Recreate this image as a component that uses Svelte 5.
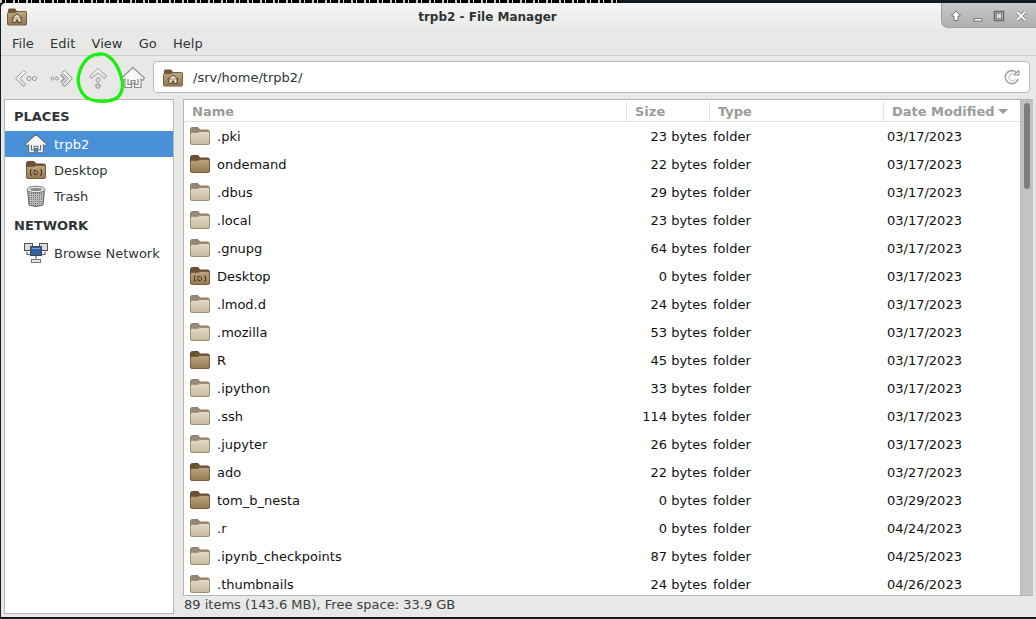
<script>
	const files = [
		{ name: '.pki', size: '23 bytes', date: '03/17/2023', kind: 'hidden' },
		{ name: 'ondemand', size: '22 bytes', date: '03/17/2023', kind: 'plain' },
		{ name: '.dbus', size: '29 bytes', date: '03/17/2023', kind: 'hidden' },
		{ name: '.local', size: '23 bytes', date: '03/17/2023', kind: 'hidden' },
		{ name: '.gnupg', size: '64 bytes', date: '03/17/2023', kind: 'hidden' },
		{ name: 'Desktop', size: '0 bytes', date: '03/17/2023', kind: 'desktop' },
		{ name: '.lmod.d', size: '24 bytes', date: '03/17/2023', kind: 'hidden' },
		{ name: '.mozilla', size: '53 bytes', date: '03/17/2023', kind: 'hidden' },
		{ name: 'R', size: '45 bytes', date: '03/17/2023', kind: 'plain' },
		{ name: '.ipython', size: '33 bytes', date: '03/17/2023', kind: 'hidden' },
		{ name: '.ssh', size: '114 bytes', date: '03/17/2023', kind: 'hidden' },
		{ name: '.jupyter', size: '26 bytes', date: '03/17/2023', kind: 'hidden' },
		{ name: 'ado', size: '22 bytes', date: '03/27/2023', kind: 'plain' },
		{ name: 'tom_b_nesta', size: '0 bytes', date: '03/29/2023', kind: 'plain' },
		{ name: '.r', size: '0 bytes', date: '04/24/2023', kind: 'hidden' },
		{ name: '.ipynb_checkpoints', size: '87 bytes', date: '04/25/2023', kind: 'hidden' },
		{ name: '.thumbnails', size: '24 bytes', date: '04/26/2023', kind: 'hidden' }
	];
	const menus = ['File', 'Edit', 'View', 'Go', 'Help'];
</script>

{#snippet folder(kind, w = 22, h = 20)}
	<svg class="folder" width={w} height={h} viewBox="0 0 22 20">
		<path
			d="M1.5 17V3.500Q1.500 1.500 3.500 1.500H9l2 2.500h7.500Q20.500 4 20.500 6v11z"
			fill={kind === 'hidden' ? '#978974' : '#6b5232'}
			stroke={kind === 'hidden' ? '#8a7b66' : '#5f482b'}
		/>
		<path
			d="M1.500 8Q1.500 6.500 3 6.500H8.500L11 5.500H19Q20.500 5.500 20.500 7V17Q20.500 18.500 19 18.500H3Q1.500 18.500 1.500 17z"
			fill={kind === 'hidden' ? 'url(#tan-light)' : 'url(#tan-dark)'}
			stroke={kind === 'hidden' ? '#a48f70' : '#7c5f38'}
		/>
		{#if kind === 'desktop'}
			<path d="M7 10H5.500v5H7M15 10h1.500v5H15M9 10.500h2.500l1 1v2l-1 1H9z" fill="none" stroke="#4a3b28" />
		{/if}
	</svg>
{/snippet}

{#snippet homeFolder()}
	<svg width="20" height="19" viewBox="0 0 20 19">
		<path d="M1 15V3q0-1.500 1.500-1.500H8L10 4h8q1 0 1 1v10z" fill="#6f5636" />
		<path d="M.5 6.500q0-1 1-1H8l2-1h8.500q1 0 1 1v11.500q0 1-1 1h-17q-1 0-1-1z" fill="url(#tan-dark)" stroke="#7c5f38" />
		<path d="M4.500 11.500L10 7l5.500 4.500M6 10.500v5h3v-2.500h2v2.500h3v-5" fill="#e8e0d0" stroke="#4a3b28" stroke-width="0.9" />
	</svg>
{/snippet}

{#snippet houseIcon(size, edge, inner)}
	<svg width={size} height={size} viewBox="0 0 24 24">
		<path d="M12 1.500L.5 12l1.500 2.500L4 13v8.500h6.500V17h3v4.500H20V13l2 1.500 1.500-2.500z" fill="#f6f6f4" stroke={edge} stroke-width="1.100" />
		<path d="M7 13v5.500h3V14.500h4v4h3V13" fill="none" stroke={inner} stroke-width="1.200" />
	</svg>
{/snippet}

<svg class="defs" width="0" height="0" aria-hidden="true">
	<defs>
		<linearGradient id="tan-light" x1="0" y1="0" x2="0" y2="1">
			<stop offset="0" stop-color="#e4dac9" />
			<stop offset="1" stop-color="#c8b89f" />
		</linearGradient>
		<linearGradient id="tan-dark" x1="0" y1="0" x2="0" y2="1">
			<stop offset="0" stop-color="#bda684" />
			<stop offset="1" stop-color="#94794f" />
		</linearGradient>
		<linearGradient id="chrome" x1="0" y1="0" x2="0" y2="1">
			<stop offset="0" stop-color="#ffffff" />
			<stop offset="1" stop-color="#d4d4d2" />
		</linearGradient>
		<pattern id="mesh" width="2" height="2" patternUnits="userSpaceOnUse">
			<rect width="2" height="2" fill="#bdbdbd" />
			<rect width="1" height="1" fill="#727272" />
		</pattern>
	</defs>
</svg>

<div class="desktop">
	<div class="strip"></div>
	<div class="window">
		<header class="titlebar">
			<span class="appicon">{@render homeFolder()}</span>
			<span class="title">trpb2 - File Manager</span>
			<div class="controls">
				<svg width="12" height="12" viewBox="0 0 12 12"><path d="M6 1L1.500 6H4v4.500h4V6h2.500z" fill="#fff" stroke="#777" /></svg>
				<svg width="12" height="12" viewBox="0 0 12 12"><rect x="2" y="8.500" width="8" height="2.500" fill="#fff" stroke="#777" /></svg>
				<svg width="12" height="12" viewBox="0 0 12 12"><rect x="1.500" y="1.500" width="9" height="9" fill="none" stroke="#666" stroke-width="1.500" /><rect x="3.500" y="3.500" width="5" height="5" fill="#ddd" stroke="#888" /></svg>
				<svg width="12" height="12" viewBox="0 0 12 12"><path d="M2 2l8 8M10 2l-8 8" stroke="#777" stroke-width="3.400" /><path d="M2 2l8 8M10 2l-8 8" stroke="#fff" stroke-width="2" /></svg>
			</div>
		</header>

		<nav class="menubar">
			{#each menus as m}<span>{m}</span>{/each}
		</nav>

		<div class="toolbar">
			<button class="tool" aria-label="Back">
				<svg width="24" height="24" viewBox="0 0 24 24">
					<path d="M9.500 4.500L1.500 12.500L9.500 20.500l2.500-2L6 12.500L12 6.500z" fill="url(#chrome)" stroke="#a0a09e" />
					<circle cx="15" cy="12.500" r="2" fill="#f2f2f0" stroke="#8f8f8d" /><circle cx="20.500" cy="12.500" r="2" fill="#f2f2f0" stroke="#8f8f8d" />
				</svg>
			</button>
			<button class="tool" aria-label="Forward">
				<svg width="24" height="24" viewBox="0 0 24 24">
					<circle cx="2.500" cy="12.500" r="1.500" fill="#f2f2f0" stroke="#8f8f8d" /><circle cx="7" cy="12.500" r="1.500" fill="#f2f2f0" stroke="#8f8f8d" />
					<path d="M14.500 4.500L22.500 12.500L14.500 20.500l-2.500-2L18 12.500L12 6.500z" fill="url(#chrome)" stroke="#8a8a88" />
					<path d="M10.500 8.500l4 4-4 4" fill="none" stroke="#8a8a88" stroke-width="1.300" />
				</svg>
			</button>
			<button class="tool" aria-label="Up">
				<svg width="24" height="24" viewBox="0 0 24 24">
					<path d="M12 2.500L3.500 10l2 2.500L12 7l6.500 5.500 2-2.500z" fill="url(#chrome)" stroke="#a0a09e" />
					<circle cx="12" cy="14" r="2" fill="#f2f2f0" stroke="#8f8f8d" /><circle cx="12" cy="20" r="2.300" fill="#cfcfcd" stroke="#8f8f8d" />
				</svg>
			</button>
			<button class="tool home" aria-label="Home">
				{@render houseIcon(24, '#8a8a88', '#8a8a88')}
			</button>
			<div class="location">
				{@render homeFolder()}
				<span class="path">/srv/home/trpb2/</span>
				<svg class="reload" width="18" height="18" viewBox="0 0 18 18">
					<path d="M14.500 6A6.500 6.500 0 1 0 15 11" fill="none" stroke="#a4a4a2" stroke-width="1.600" />
					<path d="M12 7A3.500 3.500 0 1 0 12.500 11" fill="none" stroke="#b4b4b2" />
					<path d="M16 2v5h-5z" fill="#e8e8e8" stroke="#8f8f8d" />
				</svg>
			</div>
		</div>

		<div class="panes">
			<aside class="sidebar">
				<h2>PLACES</h2>
				<div class="place active">
					{@render houseIcon(22, '#5d6b78', '#5d6b78')}
					<span>trpb2</span>
				</div>
				<div class="place">
					{@render folder('desktop', 22, 22)}
					<span>Desktop</span>
				</div>
				<div class="place">
					<svg width="22" height="23" viewBox="0 0 22 23">
						<path d="M2.500 5L4 20q7 3 14 0L19.500 5z" fill="url(#mesh)" stroke="#666" />
						<ellipse cx="11" cy="4.500" rx="9" ry="3.200" fill="#ececec" stroke="#777" />
						<ellipse cx="11" cy="4.500" rx="6" ry="1.600" fill="#8a8a8a" />
					</svg>
					<span>Trash</span>
				</div>
				<h2 class="second">NETWORK</h2>
				<div class="place net">
					<svg width="24" height="22" viewBox="0 0 24 22">
						<rect x="0.500" y="1.500" width="8" height="7" fill="#dcdcdc" stroke="#555" />
						<rect x="15.500" y="1.500" width="8" height="7" fill="#dcdcdc" stroke="#555" />
						<rect x="6.500" y="4.500" width="11" height="9" fill="#2f5fa5" stroke="#444" />
						<path d="M8 6.500h8" stroke="#7ba0d0" />
						<path d="M12 14v3M3 9.500v3h3.500M21 9.500v3h-3.500" fill="none" stroke="#666" stroke-width="1.200" />
						<rect x="7.500" y="17.500" width="9" height="3" fill="#e6e6e6" stroke="#777" />
					</svg>
					<span>Browse Network</span>
				</div>
			</aside>

			<div class="content">
				<div class="listing">
					<section class="list">
						<div class="row head">
							<div class="c-name">Name</div>
							<div class="c-size">Size</div>
							<div class="c-type">Type</div>
							<div class="c-date">Date Modified <i class="sort"></i></div>
						</div>
						{#each files as f}
							<div class="row">
								<div class="c-name">
									{@render folder(f.kind)}
									<span>{f.name}</span>
								</div>
								<div class="c-size">{f.size}</div>
								<div class="c-type">folder</div>
								<div class="c-date">{f.date}</div>
							</div>
						{/each}
					</section>
					<div class="scrollbar"><div class="thumb"></div></div>
				</div>
				<footer class="status">89 items (143.6 MB), Free space: 33.9 GB</footer>
			</div>
		</div>

		<svg class="scribble" width="53" height="55" viewBox="0 0 56 58">
			<path
				d="M27 2C20 2 13 6 9 12C4 20 2 30 5 38C8 46 13 50 20 51C29 53 41 52 46 47C50 42 51 34 49 27C47 19 43 10 36 5C32 2 27 1 24 3"
				fill="none"
				stroke="#1bee0f"
				stroke-width="3.500"
				stroke-linecap="round"
			/>
		</svg>
	</div>
</div>

<style>
	:global(body) {
		margin: 0;
		background: #0f1a28;
	}
	.defs {
		position: absolute;
	}
	.desktop {
		position: relative;
		width: 1036px;
		height: 619px;
		overflow: hidden;
		background: #101c2a;
		font-family: 'DejaVu Sans', sans-serif;
		font-size: 13px;
		color: #2e3436;
	}
	.strip {
		width: 620px;
		height: 3px;
		background: repeating-linear-gradient(90deg, #c8c8c8 0 2px, #000 2px 5px, #d8d8d8 5px 6px, #000 6px 13px);
	}
	.window {
		position: relative;
		margin-left: 1px;
		height: 614px;
		display: flex;
		flex-direction: column;
		background: #e8e8e7;
		border-radius: 5px 5px 0 0;
	}
	.titlebar {
		position: relative;
		height: 28px;
		flex: none;
		display: flex;
		align-items: center;
		justify-content: center;
		padding-right: 62px;
		background: linear-gradient(#f6f6f5, #e8e8e7);
		border-radius: 5px 5px 0 0;
	}
	.appicon {
		position: absolute;
		left: 6px;
		top: 4px;
		line-height: 0;
	}
	.title {
		font-weight: bold;
		font-size: 12px;
		color: #2e3436;
	}
	.controls {
		position: absolute;
		right: 0;
		top: 0;
		width: 95px;
		height: 25px;
		box-sizing: border-box;
		padding: 2px 9px 0 8px;
		display: flex;
		align-items: center;
		justify-content: space-between;
		background: linear-gradient(#c8c8c6, #b0b0ae);
		border-left: 1px solid #a0a09e;
		border-bottom: 1px solid #a0a09e;
		border-radius: 0 0 0 7px;
	}
	.menubar {
		height: 24px;
		flex: none;
		display: flex;
		align-items: center;
		padding: 0 0 0 11px;
		gap: 16.3px;
		border-bottom: 1px solid #cfcfcd;
		color: #2e3436;
	}
	.toolbar {
		height: 43px;
		flex: none;
		display: flex;
		align-items: center;
		padding-left: 13px;
		box-sizing: border-box;
	}
	.tool {
		width: 24px;
		height: 24px;
		padding: 0;
		margin-right: 12px;
		border: 0;
		background: none;
		line-height: 0;
	}
	.tool.home {
		margin-right: 8px;
		margin-left: -1px;
	}
	.location {
		flex: none;
		width: 877px;
		height: 32px;
		margin-top: -1px;
		box-sizing: border-box;
		display: flex;
		align-items: center;
		padding: 0 9px;
		background: #fff;
		border: 1px solid #b8b8b6;
		border-radius: 4px;
	}
	.path {
		margin-left: 10px;
		flex: 1;
	}
	.reload {
		margin-right: -1px;
	}
	.panes {
		flex: 1;
		min-height: 0;
		display: flex;
		padding-left: 3px;
	}
	.sidebar {
		width: 170px;
		height: 515px;
		flex: none;
		box-sizing: border-box;
		background: #fff;
		border: 1px solid #b6b6b4;
	}
	.sidebar h2 {
		margin: 0;
		height: 31px;
		padding: 2px 0 1px 9px;
		box-sizing: border-box;
		display: flex;
		align-items: center;
		font-size: 13px;
		font-weight: bold;
		color: #2e3436;
	}
	.sidebar h2.second {
		height: 30px;
		padding: 2px 0 0 9px;
	}
	.place {
		height: 26px;
		display: flex;
		align-items: center;
		padding-left: 20px;
		gap: 7px;
		box-sizing: border-box;
	}
	.place.net {
		height: 28px;
		padding-left: 19px;
		gap: 6px;
	}
	.place.active {
		background: #4a90d9;
		color: #fff;
	}
	.content {
		flex: 1;
		min-width: 0;
		margin-left: 9px;
		display: flex;
		flex-direction: column;
	}
	.listing {
		height: 497px;
		flex: none;
		display: flex;
		border-top: 1px solid #b6b6b4;
		border-left: 1px solid #b6b6b4;
		border-bottom: 1px solid #b6b6b4;
		box-sizing: border-box;
		margin-right: 3px;
	}
	.list {
		width: 836px;
		flex: none;
		overflow: hidden;
		background: #fff;
		color: #111;
	}
	.row {
		display: flex;
		height: 28px;
		align-items: center;
	}
	.row.head {
		height: 22px;
		padding-top: 2px;
		box-sizing: border-box;
		align-items: stretch;
		border-bottom: 1px solid #e2e2e0;
		font-weight: bold;
		color: #9a9c9a;
	}
	.c-name {
		width: 442px;
		flex: none;
		display: flex;
		align-items: center;
		gap: 6px;
		padding-left: 5px;
		box-sizing: border-box;
	}
	.folder {
		flex: none;
	}
	.c-size {
		width: 83px;
		flex: none;
		box-sizing: border-box;
		padding-right: 2px;
		text-align: right;
	}
	.c-type {
		width: 174px;
		flex: none;
		box-sizing: border-box;
		padding-left: 4px;
	}
	.c-date {
		flex: 1;
		box-sizing: border-box;
		padding-left: 4px;
		white-space: nowrap;
	}
	.head .c-name {
		width: 443px;
		padding-left: 8px;
		border-right: 1px solid #e2e2e0;
	}
	.head .c-size {
		padding: 0 0 0 8px;
		text-align: left;
		display: flex;
		align-items: center;
		border-right: 1px solid #e2e2e0;
	}
	.head .c-type {
		padding-left: 8px;
		display: flex;
		align-items: center;
		border-right: 1px solid #e2e2e0;
	}
	.head .c-date {
		padding-left: 8px;
		display: flex;
		align-items: center;
		gap: 4px;
	}
	.sort {
		width: 0;
		height: 0;
		margin-left: -1px;
		border: 5px solid transparent;
		border-top: 5px solid #9a9c9a;
		border-bottom: 0;
	}
	.scrollbar {
		flex: 1;
		background: #c2c4c2;
		border-left: 1px solid #b6b6b4;
		padding: 3px 3px 0 3px;
	}
	.thumb {
		width: 6px;
		height: 86px;
		background: #7a7e7e;
		border-radius: 3px;
	}
	.status {
		height: 17px;
		line-height: 17px;
		padding-left: 1px;
		color: #3c3f40;
	}
	.scribble {
		position: absolute;
		left: 74px;
		top: 49px;
	}
</style>
